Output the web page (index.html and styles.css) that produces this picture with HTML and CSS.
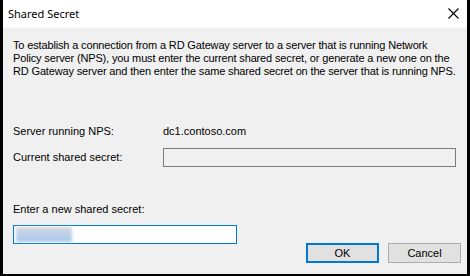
FILE: index.html
```html
<!DOCTYPE html>
<html lang="en">
<head>
    <meta charset="UTF-8">
    <meta name="viewport" content="width=device-width, initial-scale=1.0">
    <title>Shared Secret</title>
    <link rel="stylesheet" href="styles.css">
</head>
<body>
    <div class="dialog">
        <div class="titlebar">
            <span class="title">Shared Secret</span>
            <span class="close">
                <svg width="11" height="11" viewBox="0 0 11 11">
                    <path d="M0.5 0.5 L10.5 10.5 M10.5 0.5 L0.5 10.5" stroke="#000" stroke-width="1.1" fill="none"/>
                </svg>
            </span>
        </div>
        <div class="content">
            <p class="intro">To establish a connection from a RD Gateway server to a server that is running Network<br>Policy server (NPS), you must enter the current shared secret, or generate a new one on the<br>RD Gateway server and then enter the same shared secret on the server that is running NPS.</p>

            <div class="fields">
                <span class="label">Server running NPS:</span>
                <span class="value">dc1.contoso.com</span>
                <span class="label">Current shared secret:</span>
                <div class="textbox disabled"></div>
            </div>

            <div class="new-secret">
                <span class="label">Enter a new shared secret:</span>
                <div class="textbox active">
                    <span class="blurred"></span>
                </div>
            </div>

            <div class="buttons">
                <button class="btn default">OK</button>
                <button class="btn">Cancel</button>
            </div>
        </div>
    </div>
</body>
</html>
```

FILE: styles.css
```css
* {
    box-sizing: border-box;
    margin: 0;
    padding: 0;
}

body {
    width: 470px;
    height: 276px;
    background-color: #000;
    font-family: 'Liberation Sans', Arial, sans-serif;
    font-size: 11px;
    color: #000;
}

.dialog {
    width: 470px;
    height: 276px;
    border-left: 3px solid #000;
    border-right: 3px solid #000;
    border-bottom: 2px solid #000;
    display: flex;
    flex-direction: column;
    background-color: #f0f0f0;
}

.titlebar {
    flex-shrink: 0;
    height: 28px;
    background-color: #fff;
    display: flex;
    align-items: center;
    justify-content: space-between;
    padding: 0 6px 1px 5px;
}

.title {
    font-family: 'Noto Sans', 'Open Sans', sans-serif;
    font-size: 11px;
    color: #000;
}

.close {
    display: flex;
    margin-right: 2px;
}

.content {
    flex: 1;
    padding: 11px 6px 10px 10px;
    display: flex;
    flex-direction: column;
}

.intro {
    line-height: 13px;
    white-space: nowrap;
    letter-spacing: -0.15px;
}

.fields {
    display: grid;
    grid-template-columns: 150px 293px;
    align-items: center;
    row-gap: 10px;
    margin-top: 47px;
    line-height: 13px;
}

.textbox {
    height: 19px;
    border: 1px solid #7a7a7a;
    background-color: #f0f0f0;
}

.new-secret {
    display: flex;
    flex-direction: column;
    margin-top: 36px;
    line-height: 13px;
}

.new-secret .label {
    margin-bottom: 9px;
}

.textbox.active {
    width: 224px;
    height: 19px;
    border: 1px solid #0078d7;
    background-color: #fff;
    padding: 1px 2px;
}

.blurred {
    display: block;
    width: 56px;
    height: 15px;
    background: linear-gradient(#d4d8e0, #b8cde9 60%, #a8c8ef);
    filter: blur(1.5px);
}

.buttons {
    display: flex;
    justify-content: flex-end;
    gap: 9px;
    margin-top: -1px;
}

.btn {
    width: 73px;
    height: 20px;
    font-family: 'Liberation Sans', Arial, sans-serif;
    font-size: 11px;
    color: #000;
    background-color: #e1e1e1;
    border: 1px solid #adadad;
}

.btn.default {
    border: 2px solid #0078d7;
}
```
